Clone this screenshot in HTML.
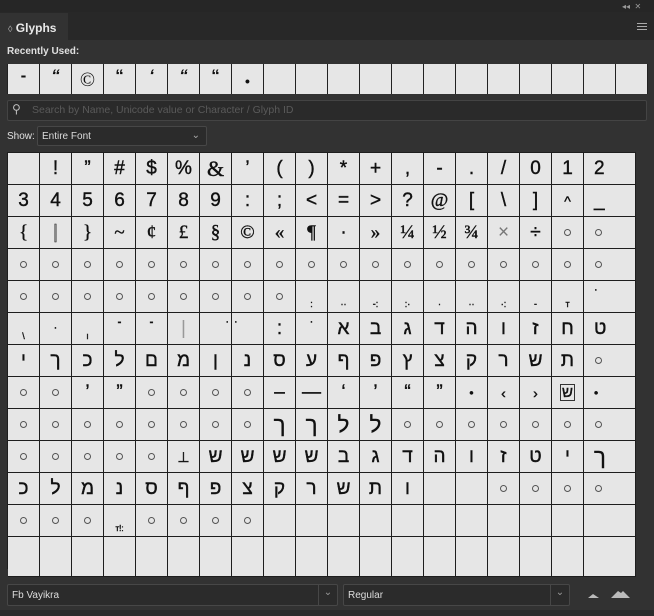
<!DOCTYPE html>
<html><head><meta charset="utf-8"><style>
*{box-sizing:border-box;margin:0;padding:0}
body{width:654px;height:616px;background:#323232;font-family:"Liberation Sans","DejaVu Sans",sans-serif;position:relative;overflow:hidden;color:#ddd}
.top{position:absolute;left:0;top:0;width:654px;height:40px;background:#262626}
.tabrow{position:absolute;left:0;top:12px;width:654px;height:28px;background:#282828}
.tab{position:absolute;left:0;top:13px;width:68px;height:27px;background:#323232;font-size:12px;font-weight:bold;color:#e8e8e8;padding:8px 0 0 8px}
.lbl{position:absolute;font-size:10px;color:#e0e0e0}
.recent{position:absolute;left:7px;top:64px;display:grid;grid-template-columns:repeat(20,32px);border-left:1px solid #222}
.recent i{height:30px;background:#e6e6e6;border-right:1px solid #222;font-style:normal;color:#111;font-size:17px;font-weight:bold;display:flex;justify-content:center;align-items:flex-start;padding-top:2px}
.search{position:absolute;left:7px;top:100px;width:640px;height:21px;border:1px solid #444;background:#2a2a2a;border-radius:2px;font-size:10.5px;color:#5a5a5a;padding:3px 0 0 24px}
.dd{position:absolute;border:1px solid #474747;background:#2b2b2b;border-radius:2px;font-size:10px;color:#ddd}
.grid{position:absolute;left:7px;top:152px;display:grid;grid-template-columns:repeat(18,32px) 52px;grid-auto-rows:32px;border-left:1px solid #1e1e1e;border-top:1px solid #1e1e1e}
.grid i{background:#e6e6e6;border-right:1px solid #1e1e1e;border-bottom:1px solid #1e1e1e;font-style:normal;color:#111;font-size:19px;display:flex;justify-content:center;align-items:center;line-height:1;-webkit-text-stroke:0.4px #111}
.grid i.s{font-size:0;align-items:flex-start;padding-top:12px}
.grid i.s::after{content:"";display:block;flex:none;box-sizing:content-box;width:5px;height:5px;border:1px solid #555;border-radius:50%}
.grid i.s.r{justify-content:flex-start;padding-left:11px}
.grid i.b{align-items:flex-end;padding-bottom:3px;font-size:9px}
.grid i.t{align-items:flex-start;padding-top:4px;font-size:11px}
.grid i.l{height:40px}
</style></head><body>
<div class="top"></div><div class="tabrow"></div>
<div style="position:absolute;left:622px;top:2px;font-size:8px;color:#999">◂◂ &nbsp;✕</div>
<div style="position:absolute;left:637px;top:23px;width:10px;height:7px;border-top:1px solid #aaa;border-bottom:1px solid #aaa"><div style="margin-top:2px;border-top:1px solid #aaa"></div></div>
<div class="tab"><span style="font-weight:normal;color:#aaa;font-size:9px">◊</span> Glyphs</div>
<div class="lbl" style="left:7px;top:46px;font-weight:bold">Recently Used:</div>
<div class="recent"><i>-</i><i style="font-style:italic">“</i><i style="font-family:'Liberation Serif';font-weight:normal;font-size:20px;padding-top:5px">©</i><i>“</i><i style="font-style:italic">‘</i><i style="font-style:italic">“</i><i>“</i><i style="padding-top:9px;font-size:14px">•</i><i></i><i></i><i></i><i></i><i></i><i></i><i></i><i></i><i></i><i></i><i></i><i></i></div>
<div class="search"><span style="position:absolute;left:4px;top:1px;color:#bbb;font-size:12px">⚲</span>Search by Name, Unicode value or Character / Glyph ID</div>
<div class="lbl" style="left:7px;top:131px">Show:</div>
<div class="dd" style="left:37px;top:126px;width:170px;height:20px;padding:4px 0 0 4px">Entire Font<span style="position:absolute;right:6px;top:3px;color:#aaa">⌄</span></div>
<div class="grid">
<i></i><i>!</i><i>”</i><i>#</i><i>$</i><i>%</i><i style="font-family:'Liberation Serif';font-size:22px">&amp;</i><i>’</i><i>(</i><i>)</i><i>*</i><i>+</i><i>,</i><i>-</i><i>.</i><i>/</i><i>0</i><i>1</i><i style="justify-content:flex-start;padding-left:10px">2</i>
<i>3</i><i>4</i><i>5</i><i>6</i><i>7</i><i>8</i><i>9</i><i>:</i><i>;</i><i>&lt;</i><i>=</i><i>&gt;</i><i>?</i><i style="font-family:'Liberation Serif'">@</i><i>[</i><i>\</i><i>]</i><i style="font-size:14px">^</i><i style="justify-content:flex-start;padding-left:10px">_</i>
<i style="font-family:'Liberation Serif'">{</i><i style="color:#888">|</i><i style="font-family:'Liberation Serif'">}</i><i style="font-family:'Liberation Serif'">~</i><i style="font-family:'Liberation Serif'">¢</i><i style="font-family:'Liberation Serif'">£</i><i style="font-family:'Liberation Serif'">§</i><i style="font-family:'Liberation Serif'">©</i><i style="font-family:'Liberation Serif'">«</i><i style="font-family:'Liberation Serif'">¶</i><i>·</i><i style="font-family:'Liberation Serif'">»</i><i style="font-family:'Liberation Serif'">¼</i><i style="font-family:'Liberation Serif'">½</i><i style="font-family:'Liberation Serif'">¾</i><i style="color:#777;-webkit-text-stroke:0">×</i><i>÷</i><i class="s"></i><i class="s r"></i>
<i class="s"></i><i class="s"></i><i class="s"></i><i class="s"></i><i class="s"></i><i class="s"></i><i class="s"></i><i class="s"></i><i class="s"></i><i class="s"></i><i class="s"></i><i class="s"></i><i class="s"></i><i class="s"></i><i class="s"></i><i class="s"></i><i class="s"></i><i class="s"></i><i class="s r"></i>
<i class="s"></i><i class="s"></i><i class="s"></i><i class="s"></i><i class="s"></i><i class="s"></i><i class="s"></i><i class="s"></i><i class="s"></i><i class="b">:</i><i class="b">··</i><i class="b">-:</i><i class="b">:·</i><i class="b">·</i><i class="b">··</i><i class="b">·:</i><i class="b">-</i><i class="b">т</i><i class="t" style="justify-content:flex-start;padding-left:10px">·</i>
<i class="b">\</i><i style="font-size:11px">·</i><i class="b">ı</i><i class="t" style="font-weight:bold">-</i><i class="t" style="font-weight:bold">-</i><i style="color:#999;-webkit-text-stroke:0">|</i><i class="t" style="justify-content:flex-end;padding-right:2px">·</i><i class="t" style="justify-content:flex-start;padding-left:2px">·</i><i>:</i><i class="t">·</i><i>א</i><i>ב</i><i>ג</i><i>ד</i><i>ה</i><i>ו</i><i>ז</i><i>ח</i><i style="justify-content:flex-start;padding-left:10px">ט</i>
<i>י</i><i>ך</i><i>כ</i><i>ל</i><i>ם</i><i>מ</i><i>ן</i><i>נ</i><i>ס</i><i>ע</i><i>ף</i><i>פ</i><i>ץ</i><i>צ</i><i>ק</i><i>ר</i><i>ש</i><i>ת</i><i class="s r"></i>
<i class="s"></i><i class="s"></i><i>’</i><i>”</i><i class="s"></i><i class="s"></i><i class="s"></i><i class="s"></i><i>–</i><i>—</i><i>‘</i><i>’</i><i>“</i><i>”</i><i style="font-size:12px">•</i><i style="font-size:14px">‹</i><i style="font-size:14px">›</i><i><span style="border:1px solid #333;font-size:15px;padding:0 1px">ש</span></i><i style="font-size:12px;justify-content:flex-start;padding-left:10px">•</i>
<i class="s"></i><i class="s"></i><i class="s"></i><i class="s"></i><i class="s"></i><i class="s"></i><i class="s"></i><i class="s"></i><i style="font-size:22px">ך</i><i style="font-size:22px">ך</i><i style="font-size:22px">ל</i><i style="font-size:22px">ל</i><i class="s"></i><i class="s"></i><i class="s"></i><i class="s"></i><i class="s"></i><i class="s"></i><i class="s r"></i>
<i class="s"></i><i class="s"></i><i class="s"></i><i class="s"></i><i class="s"></i><i style="font-size:14px">⊥</i><i>ש</i><i>ש</i><i>ש</i><i>ש</i><i>ב</i><i>ג</i><i>ד</i><i>ה</i><i>ו</i><i>ז</i><i>ט</i><i>י</i><i style="justify-content:flex-start;padding-left:10px;font-size:22px">ך</i>
<i>כ</i><i>ל</i><i>מ</i><i>נ</i><i>ס</i><i>ף</i><i>פ</i><i>צ</i><i>ק</i><i>ר</i><i>ש</i><i>ת</i><i>ו</i><i></i><i></i><i class="s"></i><i class="s"></i><i class="s"></i><i class="s r"></i>
<i class="s"></i><i class="s"></i><i class="s"></i><i class="b" style="font-size:8px">т!:</i><i class="s"></i><i class="s"></i><i class="s"></i><i class="s"></i><i></i><i></i><i></i><i></i><i></i><i></i><i></i><i></i><i></i><i></i><i></i>
<i class="l"></i><i class="l"></i><i class="l"></i><i class="l"></i><i class="l"></i><i class="l"></i><i class="l"></i><i class="l"></i><i class="l"></i><i class="l"></i><i class="l"></i><i class="l"></i><i class="l"></i><i class="l"></i><i class="l"></i><i class="l"></i><i class="l"></i><i class="l"></i><i class="l"></i>
</div>
<div class="dd" style="left:7px;top:584px;width:331px;height:22px;padding:5px 0 0 4px">Fb Vayikra<span style="position:absolute;right:0;top:0;width:19px;height:20px;border-left:1px solid #474747;color:#999;text-align:center;padding-top:2px">⌄</span></div>
<div class="dd" style="left:343px;top:584px;width:227px;height:22px;padding:5px 0 0 4px">Regular<span style="position:absolute;right:0;top:0;width:19px;height:20px;border-left:1px solid #474747;color:#999;text-align:center;padding-top:2px">⌄</span></div>
<svg style="position:absolute;left:585px;top:588px" width="50" height="14"><path d="M3 10 L8 6 L14 10 Z" fill="#bbb"/><path d="M26 10 L33 3 L36 5 L38 3 L45 10 Z" fill="#bbb"/></svg>
<div style="position:absolute;left:0;top:610px;width:654px;height:6px;background:#2a2a2a"></div>
</body></html>
